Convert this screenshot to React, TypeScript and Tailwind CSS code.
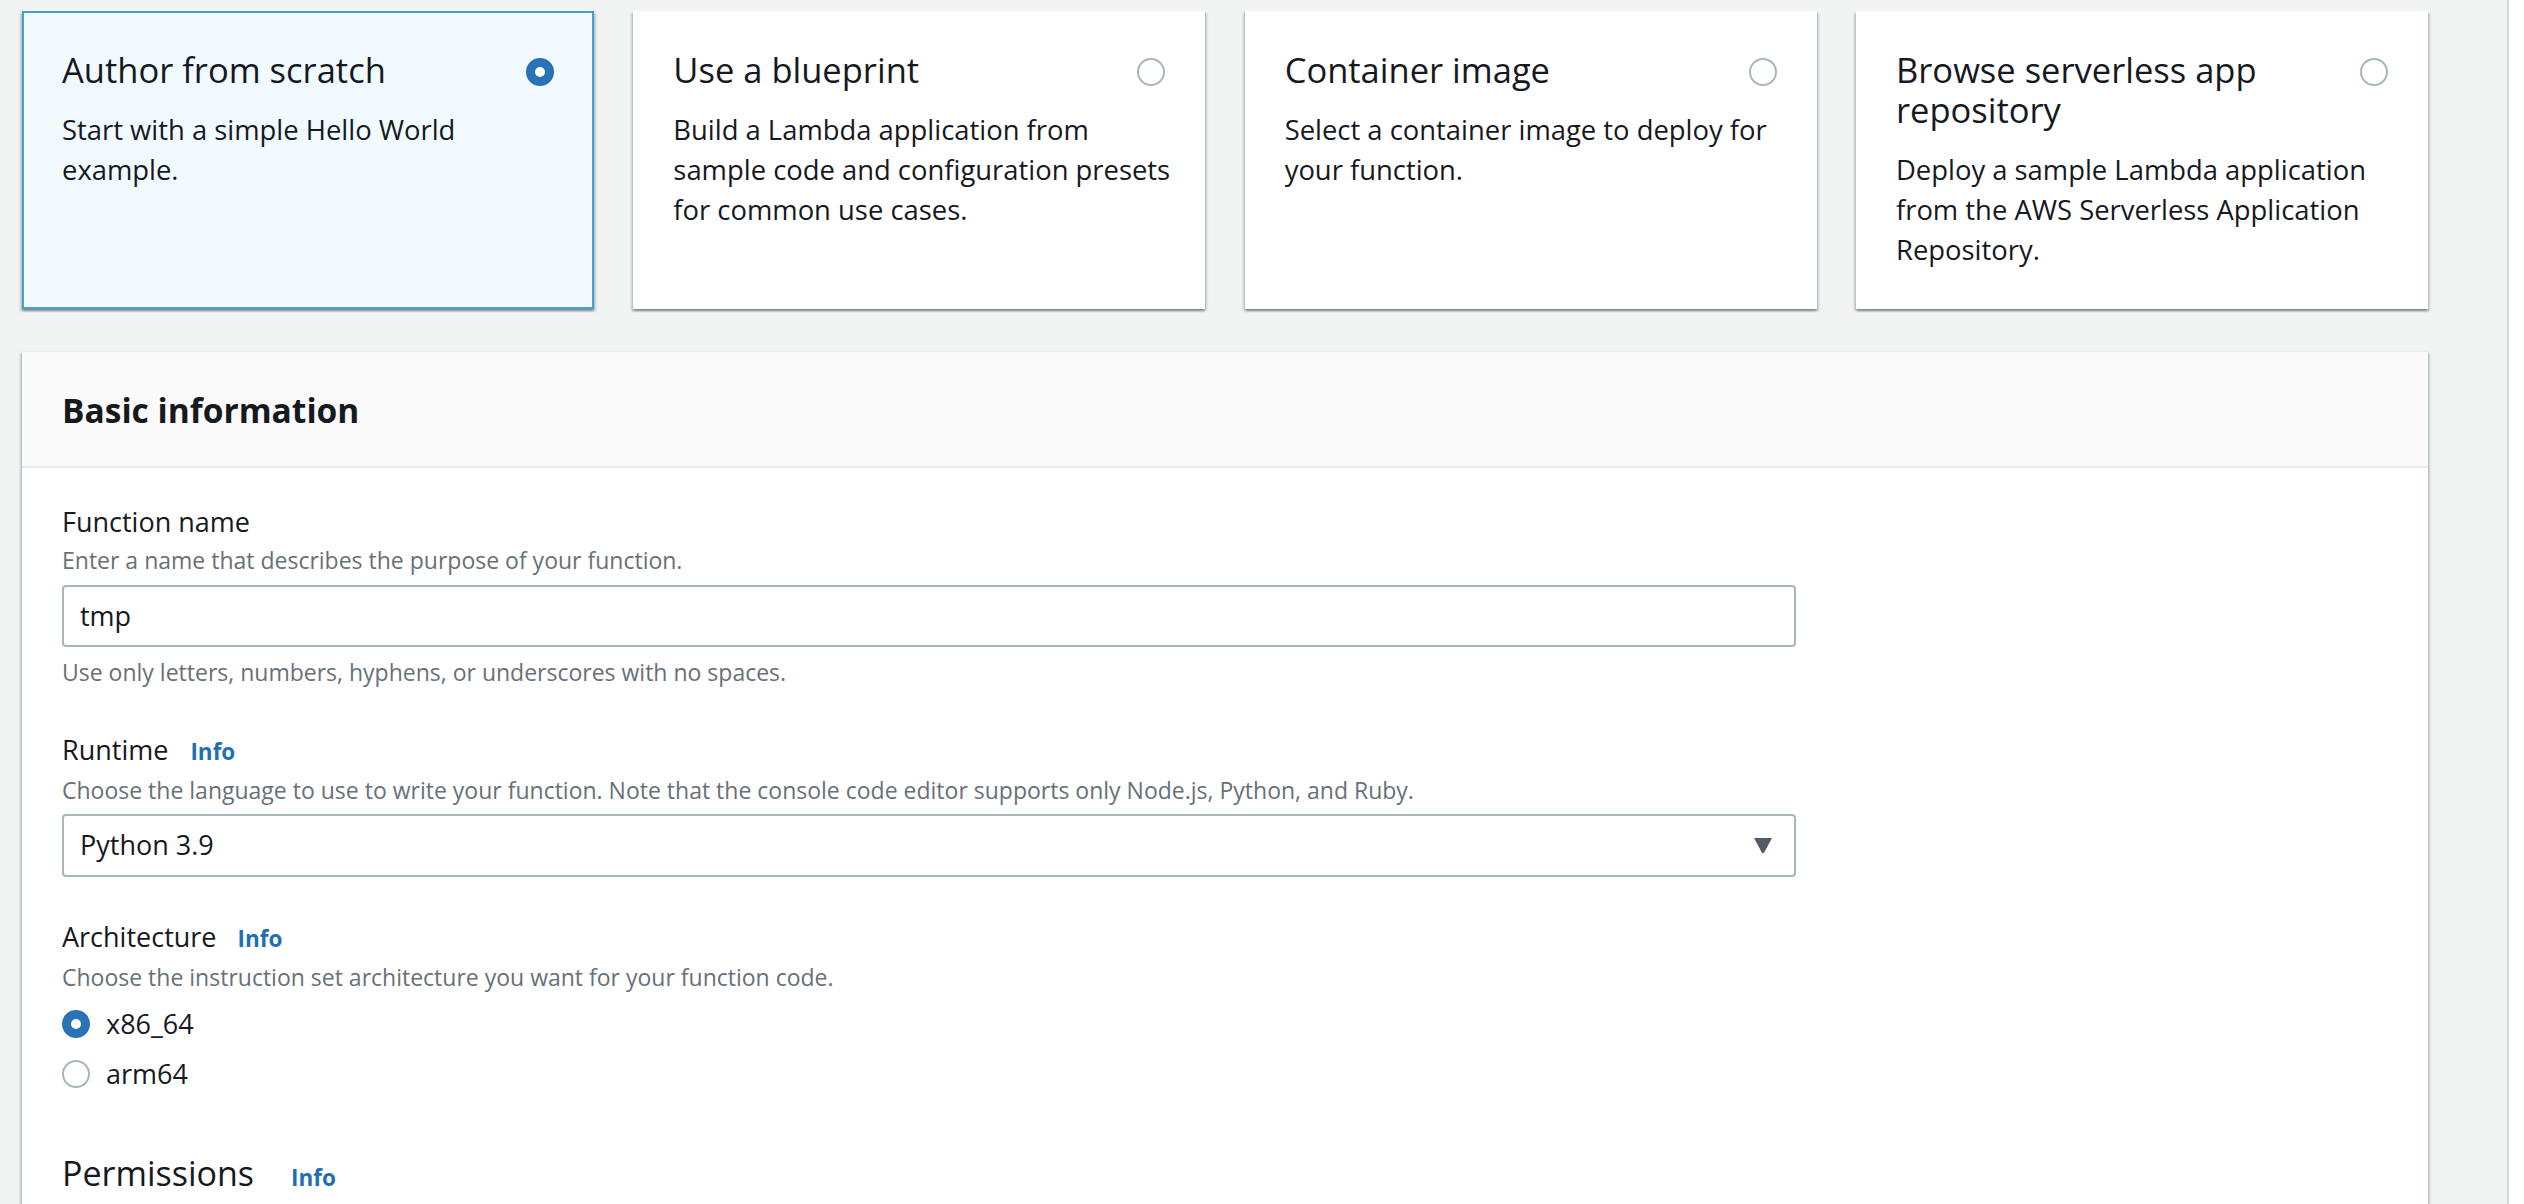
import React from "react";

const shadow =
  "shadow-[0_2px_2px_0_rgba(0,28,36,0.3),2px_2px_2px_0_rgba(0,28,36,0.15),-2px_2px_2px_0_rgba(0,28,36,0.15)]";

function Radio({ checked }: { checked: boolean }) {
  return checked ? (
    <span className="block w-[28px] h-[28px] shrink-0 rounded-full border-[9px] border-[#2a72b8] bg-white" />
  ) : (
    <span className="block w-[28px] h-[28px] shrink-0 rounded-full border-2 border-[#aab7b8] bg-white" />
  );
}

function Tile({
  title,
  body,
  selected,
}: {
  title: string;
  body: string;
  selected?: boolean;
}) {
  return (
    <div
      className={
        selected
          ? "flex-1 border-2 border-[#44a4c8] bg-[#f1faff] pl-[38px] pr-[38px] pt-[37px] pb-[37px] " + shadow
          : "flex-1 border-2 border-transparent bg-white pl-[38px] pr-[38px] pt-[37px] pb-[37px] " + shadow
      }
    >
      <div className="flex items-start gap-4">
        <div className="flex-1 text-[34.5px] leading-[40px] text-[#16191f]">{title}</div>
        <div className="mt-[8px]">
          <Radio checked={!!selected} />
        </div>
      </div>
      <p className="mt-[20px] -mr-3 text-[27.4px] leading-[40px] text-[#16191f]">{body}</p>
    </div>
  );
}

function Info() {
  return <span className="text-[22.5px] font-bold text-[#1f6fb6]">Info</span>;
}

export default function App() {
  return (
    <div className="flex h-[1204px] w-full overflow-hidden bg-[#f2f3f3] font-['Open_Sans',sans-serif]">
      <div className="flex-1 pl-[22px] pr-[79px] pt-[11px]">
        <div className="flex gap-[39.33px]">
          <Tile
            selected
            title="Author from scratch"
            body="Start with a simple Hello World example."
          />
          <Tile
            title="Use a blueprint"
            body="Build a Lambda application from sample code and configuration presets for common use cases."
          />
          <Tile
            title="Container image"
            body="Select a container image to deploy for your function."
          />
          <Tile
            title="Browse serverless app repository"
            body="Deploy a sample Lambda application from the AWS Serverless Application Repository."
          />
        </div>

        <div className={"mt-[42px] bg-white border-t border-[#eaeded] " + shadow}>
          <div className="border-b-2 border-[#eaeded] bg-[#fafafa] px-10 pt-[38px] pb-[36px]">
            <h2 className="text-[33.5px] leading-[40px] font-bold text-[#16191f]">Basic information</h2>
          </div>
          <div className="px-10 pt-[34px] pb-10 text-[#16191f]">
            <div className="text-[27px] leading-[40px]">Function name</div>
            <div className="text-[23px] leading-[36px] text-[#687078]">
              Enter a name that describes the purpose of your function.
            </div>
            <div className="mt-[7px] flex h-[62px] w-[1734px] items-center rounded-[4px] border-2 border-[#aab7b8] pl-[16px] text-[27px]">
              tmp
            </div>
            <div className="mt-[7px] text-[23px] leading-[36px] text-[#687078]">
              Use only letters, numbers, hyphens, or underscores with no spaces.
            </div>

            <div className="mt-[40px] flex items-baseline gap-[22px] text-[27px] leading-[40px]">
              <span>Runtime</span>
              <Info />
            </div>
            <div className="text-[23px] leading-[36px] text-[#687078]">
              Choose the language to use to write your function. Note that the console code editor supports only Node.js, Python, and Ruby.
            </div>
            <div className="mt-[6px] flex h-[63px] w-[1734px] items-center justify-between rounded-[4px] border-2 border-[#aab7b8] pl-[16px] pr-[21px] text-[27px]">
              <span>Python 3.9</span>
              <svg width="20" height="17" viewBox="0 0 20 17">
                <path d="M1 1 H19 L11.2 15.4 Q10 17 8.8 15.4 Z" fill="#545b64" />
              </svg>
            </div>

            <div className="mt-[40px] flex items-baseline gap-[21px] text-[27px] leading-[40px]">
              <span>Architecture</span>
              <Info />
            </div>
            <div className="text-[23px] leading-[36px] text-[#687078]">
              Choose the instruction set architecture you want for your function code.
            </div>
            <div className="mt-[9px] flex h-[40px] items-center gap-[16px] text-[27px] leading-[40px]">
              <Radio checked />
              <span>x86_64</span>
            </div>
            <div className="mt-[10px] flex h-[40px] items-center gap-[16px] text-[27px] leading-[40px]">
              <Radio checked={false} />
              <span>arm64</span>
            </div>

            <div className="mt-[57px] flex items-baseline gap-[37px]">
              <span className="text-[34px] leading-[44px]">Permissions</span>
              <Info />
            </div>
          </div>
        </div>
      </div>
      <div className="w-[17px] border-l-2 border-[#d5dbdb] bg-white" />
    </div>
  );
}
